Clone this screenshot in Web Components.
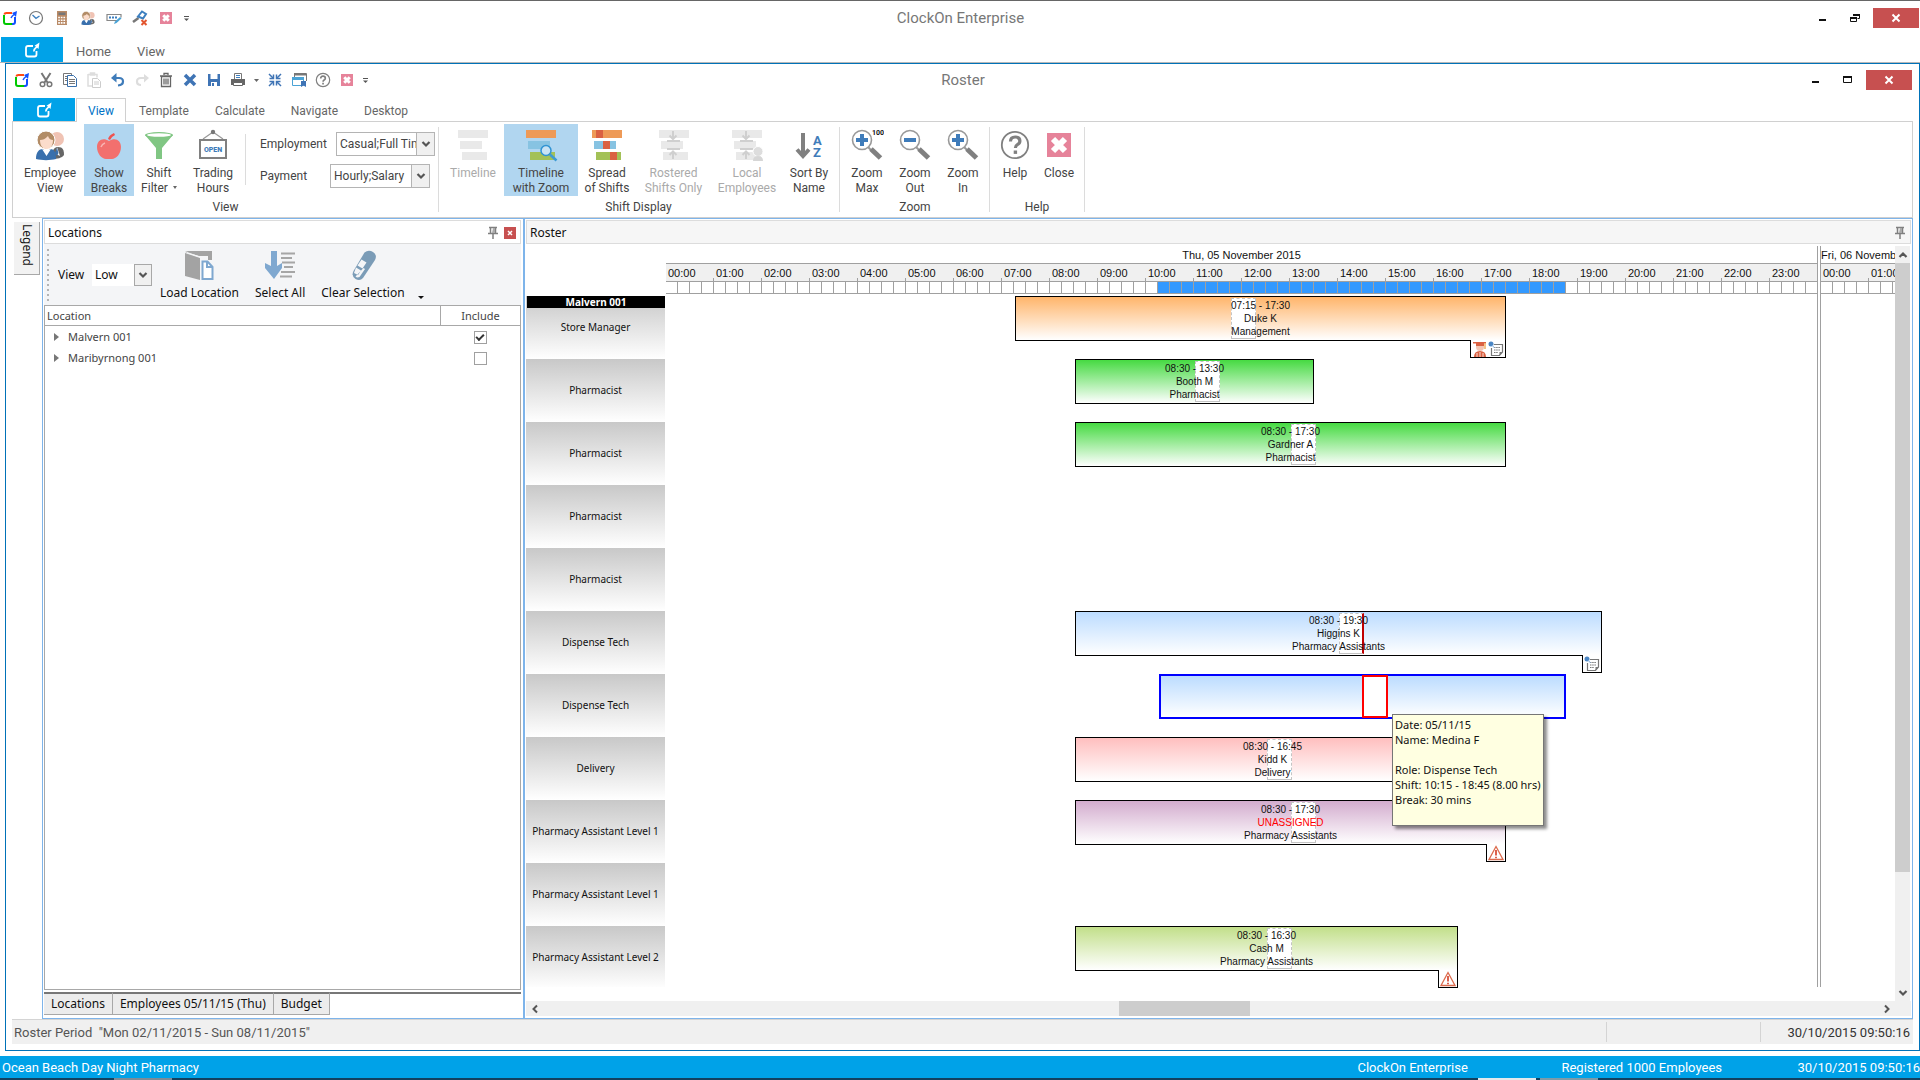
<!DOCTYPE html>
<html lang="en">
<head>
<meta charset="utf-8">
<title>ClockOn Enterprise</title>
<style>
html,body{margin:0;height:100%}
body{font-family:Roboto,"Open Sans",sans-serif;font-size:12px;line-height:15px;color:#444;background:#fff;overflow:hidden}
</style>
</head>
<body>
<clock-app></clock-app>
<script>
const ICONS = {
  logo: ['0 0 16 16', '<g fill="none" stroke-width="2"><path d="M2 5V12q0 2 2 2H10" stroke="#00c800"/><path d="M2.300 4.500q.4-1.500 2-1.500H10" stroke="#ff4a12"/><path d="M10 14h1q2 0 2-2V7" stroke="#1250ff"/><path d="M9 8q1-2 3-3.500" stroke="#1250ff" stroke-width="1.500"/></g><path d="M10 3l5-2-1 6z" fill="#1250ff"/>'],
  logowhite: ['0 0 16 16', '<path d="M9 4H4Q2 4 2 6V12.500q0 2 2 2H10.500q2 0 2-2V9" fill="none" stroke="#fff" stroke-width="1.800"/><path d="M9 9.500q.5-3.500 3-5l-1.500-.8L15.500.5 14.500 7l-1.300-1.200Q11.500 6.500 10.500 9.500z" fill="#fff"/>'],
  clock: ['0 0 16 16', '<circle cx="8" cy="8" r="6.500" fill="#fff" stroke="#777" stroke-width="1.200"/><path d="M4.500 5l3.500 3.300L11.500 6" fill="none" stroke="#3d7fbf" stroke-width="1.300"/>'],
  calc: ['0 0 16 16', '<path d="M3 1h10v14H3z" fill="#b98a66"/><path d="M4.500 2.500h7v2.500h-7z" fill="#777"/><g stroke="#fff" stroke-width="1.600" stroke-dasharray="1.700 .9"><path d="M4.200 7.500h8M4.200 10.200h8M4.200 12.900h8"/></g>'],
  people: ['0 0 34 34', '<circle cx="24" cy="11" r="7" fill="#f0c3b4"/><path d="M20 31c-2-10 2-12 5-12 5 0 6 3 6 8-2 3-7 4-11 4z" fill="#666"/><path d="M24 19l3 9-4-2z" fill="#fff"/><path d="M24 20l1.500 5-1.500 3-2-3z" fill="#3970ad"/><circle cx="13" cy="12" r="9" fill="#b28c66" stroke="#fff"/><path d="M7 12c3 0 5-1 8-4 1 3 3 4 5 4 0 6-3 9-6.500 9S7 18 7 12z" fill="#fbdccb"/><path d="M3 31c0-7 3-10 7-10l4 4 3-4c4 0 6 3 6 10-6 1.500-14 1.500-20 0z" fill="#3970ad"/><path d="M9 21l4.500 7L18 21c-3 1.500-6 1.500-9 0z" fill="#fff"/>'],
  keyboard: ['0 0 16 16', '<path d="M12 10.500H1v-6h14v3" fill="none" stroke="#888" stroke-width="1.200"/><path d="M3 7.500h8" stroke="#3d7fbf" stroke-width="2" stroke-dasharray="2 1"/><path d="M8 14l1-2.500L14 7l1.500 1.500-5 4.500z" fill="#4aa3d6"/>'],
  gavel: ['0 0 16 16', '<path d="M1 12l5.500-4" stroke="#777" stroke-width="2.500"/><path d="M6 6.500l5 2L14 4l-4-2.500z" fill="#fff" stroke="#3d7fbf" stroke-width="2"/><path d="M9.500 10l5 5m0-5l-5 5" stroke="#e2552f" stroke-width="2"/>'],
  closepink: ['0 0 24 24', '<path d="M0 0h24v24H0z" fill="#e6839a"/><path d="M6.500 6.500l11 11m0-11l-11 11" stroke="#fff" stroke-width="6"/>'],
  more: ['0 0 5 16', '<path d="M0 6.500h5" stroke="#555"/><path d="M0 8.500h5L2.500 11z" fill="#555"/>'],
  caret: ['0 0 5 16', '<path d="M0 7h5L2.500 10z" fill="#666"/>'],
  cut: ['0 0 16 16', '<path d="M3.500 1l6 9.500M12.500 1l-6 9.500" stroke="#777" stroke-width="2"/><g fill="#fff" stroke="#777" stroke-width="1.500"><circle cx="4.500" cy="12.300" r="2.300"/><circle cx="11.500" cy="12.300" r="2.300"/></g>'],
  copy: ['0 0 16 16', '<path d="M1.500 1.500h8v11h-8z" fill="#fff" stroke="#777"/><path d="M5.500 3.500h6l3 3v8h-9z" fill="#fff" stroke="#3970ad"/><path d="M7 7.500h6M7 9.500h6M7 11.500h6M3 4.500h2M3 6.500h2M3 8.500h2" stroke="#777"/>'],
  paste: ['0 0 16 16', '<path d="M2 2.500h9v3M2 2v12h4M4.500 1h4v2h-4z" fill="none" stroke="#ddd" stroke-width="1.500"/><path d="M6.500 6.500h5l3 3v6h-8z" fill="#fff" stroke="#ccc"/><path d="M8 10h5M8 12h5" stroke="#ccc"/>'],
  undo: ['0 0 16 16', '<path d="M3 6h6q4 0 4 3.500T8 13.500" fill="none" stroke="#3f7cba" stroke-width="2.200"/><path d="M6.500 1L1 6l5.500 4.500z" fill="#3f7cba"/>'],
  redo: ['0 0 16 16', '<path d="M13 6H7Q3 6 3 9.500t4 3.500" fill="none" stroke="#ddd" stroke-width="2.200"/><path d="M10 2l5 4-5 4.500z" fill="#ddd"/>'],
  trash: ['0 0 16 16', '<path d="M3.500 4.500h9v10h-9zM2 4h12M6 3V1.500h4V3M6 6.500v6M8 6.500v6M10 6.500v6" fill="none" stroke="#666" stroke-width="1.300"/>'],
  cross: ['0 0 16 16', '<path d="M3 3l10 10M13 3L3 13" stroke="#3f74b5" stroke-width="3.500"/>'],
  save: ['0 0 16 16', '<path d="M2 2h12v12H2z" fill="#3f74b5"/><path d="M4.500 2h7v5h-7zM5 10h6v4H5z" fill="#fff"/><path d="M6 11h2v3H6z" fill="#3f74b5"/>'],
  print: ['0 0 16 16', '<path d="M4.500 7V1.500h7V7" fill="#fff" stroke="#777"/><path d="M6 3.500h4M6 5.500h4" stroke="#3d7fbf"/><path d="M1 7h14v6H1z" fill="#666"/><path d="M3.500 10.500h9v3h-9z" fill="#fff" stroke="#666"/>'],
  shrink: ['0 0 16 16', '<g stroke="#3f74b5" stroke-width="1.500" fill="none"><path d="M2 2l4 4M14 2L10 6M2 14l4-4M14 14L10 10"/><path d="M2.500 6.500h4v-4M13.500 6.500h-4v-4M2.500 9.500h4v4M13.500 9.500h-4v4"/></g>'],
  windows: ['0 0 16 16', '<path d="M3.500 5V1.500h12V9" fill="none" stroke="#777"/><path d="M3 1h12v2.500H3z" fill="#777"/><path d="M1.500 5.500h11v8h-11z" fill="#fff" stroke="#4aa3d6"/><path d="M1 5h12v3H1z" fill="#4aa3d6"/><path d="M10 9h5v6l-2.500-1.500L10 15z" fill="#3f74b5"/>'],
  help: ['0 0 34 34', '<circle cx="17" cy="17" r="13.200" fill="none" stroke="#808080" stroke-width="1.800"/><path d="M12.500 13.500q0-4.500 4.700-4.500t4.700 4q0 2.300-2.500 3.700-2 1.200-2 3.300" fill="none" stroke="#808080" stroke-width="3.200"/><path d="M15.700 22.500h3.400v3.400h-3.400z" fill="#808080"/>'],
  smallhelp: ['0 0 16 16', '<circle cx="8" cy="8" r="6.700" fill="none" stroke="#808080" stroke-width="1.200"/><path d="M5.700 6.500q0-2.300 2.300-2.300t2.300 2q0 1.200-1.200 1.900-1 .6-1 1.700" fill="none" stroke="#808080" stroke-width="1.700"/><path d="M7.200 10.800h1.700v1.700H7.200z" fill="#808080"/>'],
  apple: ['0 0 34 34', '<path d="M17 13c6-4 12-1 12 6 0 7-5 12-9 12h-6c-4 0-9-5-9-12 0-7 6-10 12-6z" fill="#f2706e"/><path d="M16 11q1-4 6-6l1 2q-4 2-5 5z" fill="#ef5350"/><path d="M9 19q1-3 4-4" fill="none" stroke="#f9b4b2" stroke-width="1.500"/>'],
  funnel: ['0 0 34 34', '<path d="M3 7l11 13v11h6V20L31 7z" fill="#80c683"/><ellipse cx="17" cy="7" rx="14" ry="3" fill="#80c683"/><ellipse cx="17" cy="7" rx="12" ry="1.800" fill="#fff"/>'],
  open: ['0 0 34 34', '<path d="M17 4L7 11M17 4l10 7" stroke="#999" stroke-width="1.200"/><circle cx="17" cy="4" r="2.200" fill="#777"/><path d="M4 12h26v18H4z" fill="#fff" stroke="#808080" stroke-width="2"/><text x="17" y="24" text-anchor="middle" font-family="Roboto,sans-serif" font-size="7" font-weight="900" fill="#3f7cba">OPEN</text>'],
  lines: ['0 0 34 34', '<path d="M2 2h30v8H2zM4 13h22v8H4zM6 24h25v8H6z" fill="#e9e9e9"/>'],
  linezoom: ['0 0 34 34', '<path d="M2 2h30v8H2z" fill="#ee9a57"/><path d="M4 13h22v8H4z" fill="#87c3e2"/><path d="M6 24h25v8H6z" fill="#a3c157"/><circle cx="22" cy="22.500" r="5" fill="#c9e3f4" stroke="#2f93d3" stroke-width="1.500"/><path d="M26 26.500l6.500 6" stroke="#3d9ad4" stroke-width="2.500"/>'],
  spread: ['0 0 34 34', '<path d="M2 2h30v8H2z" fill="#ee9a57"/><path d="M4 13h22v8H4z" fill="#87c3e2"/><path d="M6 24h25v8H6z" fill="#a3c157"/><path d="M6 2h7v8H6zM13 13h7v8h-7zM20 24h7v8h-7z" fill="#da6142"/>'],
  rostered: ['0 0 34 34', '<path d="M2 2h30v8H2zM4 13h22v8H4zM6 24h25v8H6z" fill="#e9e9e9"/><path d="M10 13h13M10 21h13M16 3v7M16 24v7M12.500 7.500l3.500 3.500 3.500-3.500M12.500 27l3.500-3.500 3.500 3.500" fill="none" stroke="#cfcfcf" stroke-width="2"/>'],
  local: ['0 0 34 34', '<path d="M2 2h30v8H2zM4 13h22v8H4zM6 24h25v8H6z" fill="#e9e9e9"/><path d="M10 13h13M10 21h13M16 3v7M16 24v7M12.500 7.500l3.500 3.500 3.500-3.500M12.500 27l3.500-3.500 3.500 3.500" fill="none" stroke="#cfcfcf" stroke-width="2"/><circle cx="28" cy="23.500" r="5" fill="#ddd" stroke="#fff"/><path d="M23 33q0-5 5-5t5 5z" fill="#d6d6d6"/>'],
  sort: ['0 0 34 34', '<path d="M11 5v22M5 21.500l6 6.500 6-6.500" fill="none" stroke="#808080" stroke-width="4"/><g font-family="Roboto,sans-serif" font-weight="700" font-size="13" fill="#3f7cba"><text x="21" y="16.500">A</text><text x="21" y="29">Z</text></g>'],
  zoomin: ['0 0 34 34', '<path d="M18 19l4 4" stroke="#999" stroke-width="2"/><path d="M21 21l9.500 9" stroke="#808080" stroke-width="5"/><circle cx="12" cy="12" r="9.500" fill="#fff" stroke="#999" stroke-width="1.600"/><path d="M12 6v12M6 12h12" stroke="#3f7cba" stroke-width="4"/>'],
  zoomout: ['0 0 34 34', '<path d="M18 19l4 4" stroke="#999" stroke-width="2"/><path d="M21 21l9.500 9" stroke="#808080" stroke-width="5"/><circle cx="12" cy="12" r="9.500" fill="#fff" stroke="#999" stroke-width="1.600"/><path d="M6 12h12" stroke="#3f7cba" stroke-width="4"/>'],
  zoommax: ['0 0 34 34', '<path d="M18 19l4 4" stroke="#999" stroke-width="2"/><path d="M21 21l9.500 9" stroke="#808080" stroke-width="5"/><circle cx="12" cy="12" r="9.500" fill="#fff" stroke="#999" stroke-width="1.600"/><path d="M12 6v12M6 12h12" stroke="#3f7cba" stroke-width="4"/><text x="22" y="7" font-family="Roboto,sans-serif" font-size="7" font-weight="700" fill="#111">100</text>'],
  bigclose: ['0 0 34 34', '<path d="M5 5h24v24H5z" fill="#e6839a"/><path d="M11 11l12 12m0-12L11 23" stroke="#fff" stroke-width="6"/>'],
  load: ['0 0 32 32', '<path d="M2 4l15 5v22L2 27z" fill="#a3a3a3"/><path d="M2 3L5 2h24v9h-4V7h-9z" fill="#a3a3a3"/><path d="M4 3.500L17 8h8" fill="none" stroke="#f4f5f7"/><path d="M19.500 12.500h5l5 5.500v12h-10z" fill="#fff" stroke="#7fa8d0" stroke-width="2"/><path d="M24 12v6h6" fill="none" stroke="#7fa8d0" stroke-width="2"/>'],
  selectall: ['0 0 32 32', '<path d="M7 2h6v15l5-3v5l-8 11L1 19v-5l6 3z" fill="#7fa8d0"/><path d="M17 4.500h14M17 9h11M18 13.500h13M20 18h9M17 23h14M16 27.500h12" stroke="#a6a6a6" stroke-width="2"/>'],
  clear: ['0 0 32 32', '<path d="M17.500 3.500q4-3 8.500-.5 4.500 3 2 8L16 29q-3 3.500-7.500 1-4.500-3-2-8z" fill="#7b9cb7"/><path d="M14.500 10.500l5 3-4 6-5-3zM9 18.500l5 3-3 4.500-4-2zM8.500 27.500q1.500 1.500 4 .5L18 20l-1.500-1z" fill="#f4f5f7"/>'],
  pin: ['0 0 12 14', '<path d="M2 1.500h8M1 7.500h10M3.500 2v5M8.500 2v5M6 8v5" fill="none" stroke="#808080" stroke-width="1.500"/><path d="M6 2h2v5H5z" fill="#aaa"/>'],
  xsmall: ['0 0 12 12', '<path d="M0 0h12v12H0z" fill="#c75050"/><path d="M4 4l4 4m0-4L4 8" stroke="#fff" stroke-width="1.500"/>'],
  min: ['0 0 12 12', '<path d="M2 8h7" stroke="#111" stroke-width="2"/>'],
  restore: ['0 0 12 12', '<path d="M4.500 4V2.500h6v4H8.500" fill="none" stroke="#111"/><path d="M4 2h7v2H4zM1 5h7v2H1z" fill="#111"/><path d="M1.500 5.500h6v4h-6z" fill="none" stroke="#111"/>'],
  max: ['0 0 12 12', '<path d="M1.500 3.500h8v5h-8z" fill="none" stroke="#111"/><path d="M1 2h9v2H1z" fill="#111"/>'],
  x: ['0 0 12 12', '<path d="M2.500 2.500l7 7m0-7l-7 7" stroke="#fff" stroke-width="2"/>'],
  chevdown: ['0 0 10 10', '<path d="M1.500 3L5 6.500 8.500 3" fill="none" stroke="#555" stroke-width="2.200"/>'],
  chevup: ['0 0 10 10', '<path d="M1.500 7L5 3.500 8.500 7" fill="none" stroke="#555" stroke-width="2.200"/>'],
  chevleft: ['0 0 10 10', '<path d="M7 1.500L3.500 5 7 8.500" fill="none" stroke="#555" stroke-width="2"/>'],
  chevright: ['0 0 10 10', '<path d="M3 1.500L6.500 5 3 8.500" fill="none" stroke="#555" stroke-width="2"/>'],
  graduate: ['0 0 16 16', '<path d="M4 1h8v4H4z" fill="#da6142"/><path d="M1 1h13v1.500H1z" fill="#da6142"/><path d="M13 2v6" stroke="#f0b060" stroke-width="1.500"/><path d="M4 5h8q.5 5-4 5T4 5z" fill="#f3c6b4"/><path d="M2 16q0-6 6-6t6 6z" fill="#da6142"/><path d="M8 11v5M5 12v4M11 12v4" stroke="#fff" stroke-width=".8"/>'],
  note: ['0 0 16 16', '<path d="M6 3.500h8.500v7.500l-3 3.500h-8V7" fill="#fff" stroke="#777" stroke-width="1.200"/><path d="M6 6.500h6M6 9h6M6 11.500h4" stroke="#777" stroke-dasharray="1.500 .7"/><path d="M11.500 14.500V11h3z" fill="#777"/><circle cx="3" cy="3" r="2.500" fill="#4a86c5"/><path d="M4 4l2.500 3" stroke="#8ab4e0"/>'],
  warn: ['0 0 16 16', '<path d="M8 1.500L15 14.500H1z" fill="#fff" stroke="#dc6b4e" stroke-width="1.300"/><path d="M8 5v5.500M8 11.800v1.500" stroke="#d9503a" stroke-width="1.800"/>']
};

const component = (name, markup, setup) => {
  const template = document.createElement('template');
  template.innerHTML = markup;
  customElements.define(name, class extends HTMLElement {
    connectedCallback() {
      if (this.shadowRoot) return;
      const root = this.attachShadow({ mode: 'open' });
      root.append(template.content.cloneNode(true));
      if (setup) setup(this, root);
    }
  });
};

component('ui-icon', `<style>:host{display:block;width:16px;height:16px;flex:none}svg{display:block;width:100%;height:100%}</style>`, (host, root) => {
  const [box, shapes] = ICONS[host.getAttribute('name')];
  const holder = document.createElement('template');
  holder.innerHTML = `<svg viewBox="${box}" aria-hidden="true">${shapes}</svg>`;
  root.append(holder.content);
});

/* Caption row of a window: quick access tools, centred title, window controls */
component('title-bar', `<style>
:host{display:grid;grid-template-columns:1fr auto 1fr;align-items:center;box-sizing:border-box;height:36px;padding:0 1px 3px 2px}
h1{margin:0;font-size:15px;line-height:20px;font-weight:400;color:#777;padding-top:1px}
.tools{display:flex;gap:var(--tool-gap,10px);align-items:center}
button{border:0;padding:0;background:none;display:grid;place-items:center}
.tools button{width:16px}
.tools button.thin,.thin ui-icon{width:5px}
.small ui-icon{width:12px;height:12px}
.win{display:flex;justify-content:flex-end}
.win button{width:32px;height:20px}
.win button.close{width:46px;background:#c75050;margin-left:2px}
.win ui-icon{width:12px;height:12px}
</style><div class="tools"></div><h1><slot></slot></h1><div class="win"></div>`, (host, root) => {
  const kinds = { more: 'thin', caret: 'thin', closepink: 'small' };
  root.querySelector('.tools').innerHTML = host.getAttribute('tools').split(' ').map(t =>
    `<button aria-label="${t}" class="${kinds[t] || ''}"><ui-icon name="${t}"></ui-icon></button>`).join('');
  root.querySelector('.win').innerHTML = `<button aria-label="Minimise"><ui-icon name="min"></ui-icon></button><button aria-label="Size"><ui-icon name="${host.getAttribute('size')}"></ui-icon></button><button class="close" aria-label="Close"><ui-icon name="x"></ui-icon></button>`;
});

component('ribbon-tabs', `<style>
:host{display:flex;align-items:stretch}
button{font:inherit;color:#666;background:none;border:0;padding:3px 13px 0}
.app{width:62px;background:#00a2e8;display:grid;place-items:center;padding:0}
.on{color:#0072c6;background:#fff;border:1px solid #d0d0d0;border-bottom:0;padding:2px 11px 0;margin:0 0 -1px 1px;position:relative}
</style><button class="app" aria-label="Application menu"><ui-icon name="logowhite"></ui-icon></button>`, (host, root) => {
  host.getAttribute('tabs').split(',').forEach(t => {
    const b = document.createElement('button');
    b.textContent = t;
    if (t === host.getAttribute('active')) b.className = 'on';
    root.append(b);
  });
});

component('ribbon-group', `<style>
:host{display:flex;flex-direction:column;padding:2px var(--end,3px) 0 3px;box-sizing:border-box}
.row{display:flex;align-items:flex-start}
.label{text-align:center;margin-top:4px;color:#444}
</style><div class="row"><slot></slot></div><div class="label"></div>`, (host, root) => {
  root.querySelector('.label').textContent = host.getAttribute('label');
});

component('ribbon-separator', `<style>:host{display:block;width:1px;background:#dcdcdc;margin:5px 0}</style>`);

component('ribbon-button', `<style>
:host{display:block;width:var(--w,48px);flex:none}
button{font:inherit;color:#444;width:100%;height:72px;padding:4px 0 0;border:0;background:none;display:flex;flex-direction:column;align-items:center;gap:4px}
:host([active]) button{background:#b1d6f0}
button:disabled{color:#aaa}
ui-icon{width:34px;height:34px}
span{white-space:pre;text-align:center}
</style><button><span><slot></slot></span></button>`, (host, root) => {
  const button = root.querySelector('button');
  button.insertAdjacentHTML('afterbegin', `<ui-icon name="${host.getAttribute('icon')}"></ui-icon>`);
  button.disabled = host.hasAttribute('off');
});

component('combo-box', `<style>
:host{display:flex;align-items:center}
label{min-width:var(--label,70px)}
.box{display:grid;grid-template-columns:1fr 18px;box-sizing:border-box;width:var(--field,100px);height:24px;border:1px solid #b4b4b4;background:#fff}
:host([flat]) .box{height:22px;border:0}
select{grid-area:1/1/2/3;font:inherit;color:inherit;min-width:0;width:100%;appearance:none;border:0;background:none;padding:0 18px 0 3px;margin:0;outline:0;border-radius:0}
.arrow{grid-area:1/2;pointer-events:none;background:#f0f0f0;border-left:1px solid #b4b4b4;display:grid;place-items:center}
:host([flat]) .arrow{border:1px solid #a8a8a8}
.arrow ui-icon{width:10px;height:10px}
</style><label for="s"></label><div class="box"><select id="s"><option></option></select><span class="arrow"><ui-icon name="chevdown"></ui-icon></span></div>`, (host, root) => {
  root.querySelector('label').textContent = host.getAttribute('label');
  root.querySelector('option').textContent = host.getAttribute('value');
});

component('roster-ribbon', `<style>
:host{display:flex;border:1px solid #d0d0d0;height:95px}
.inner{width:1px;height:51px;background:#dcdcdc;margin:10px 14px 0 3px}
.fields{display:flex;flex-direction:column;gap:8px;padding-top:8px}
.emp{--label:76px;--field:99px}
.caret{display:inline-block;width:0;border:2px solid transparent;border-top:3px solid #666;border-bottom:0;margin:0 0 3px 5px}
</style>
<ribbon-group label="View">
<ribbon-button icon="people" style="--w:68px">Employee
View</ribbon-button><ribbon-button icon="apple" active style="--w:50px">Show
Breaks</ribbon-button><ribbon-button icon="funnel" style="--w:50px">Shift
Filter<i class="caret"></i></ribbon-button><ribbon-button icon="open" style="--w:58px">Trading
Hours</ribbon-button><span class="inner"></span>
<div class="fields"><combo-box class="emp" label="Employment" value="Casual;Full Tim"></combo-box><combo-box label="Payment" value="Hourly;Salary"></combo-box></div>
</ribbon-group><ribbon-separator></ribbon-separator>
<ribbon-group label="Shift Display" style="--end:4px">
<ribbon-button icon="lines" off style="--w:62px">Timeline</ribbon-button><ribbon-button icon="linezoom" active style="--w:74px">Timeline
with Zoom</ribbon-button><ribbon-button icon="spread" style="--w:58px">Spread
of Shifts</ribbon-button><ribbon-button icon="rostered" off style="--w:75px">Rostered
Shifts Only</ribbon-button><ribbon-button icon="local" off style="--w:72px">Local
Employees</ribbon-button><ribbon-button icon="sort" style="--w:52px">Sort By
Name</ribbon-button>
</ribbon-group><ribbon-separator></ribbon-separator>
<ribbon-group label="Zoom" style="--end:2px">
<ribbon-button icon="zoommax">Zoom
Max</ribbon-button><ribbon-button icon="zoomout">Zoom
Out</ribbon-button><ribbon-button icon="zoomin">Zoom
In</ribbon-button>
</ribbon-group><ribbon-separator></ribbon-separator>
<ribbon-group label="Help">
<ribbon-button icon="help" style="--w:44px">Help</ribbon-button><ribbon-button icon="bigclose" style="--w:44px">Close</ribbon-button>
</ribbon-group><ribbon-separator></ribbon-separator>`);

/* Docked panel with a caption */
component('dock-panel', `<style>
:host{display:flex;flex-direction:column;min-width:0;padding:1px;font-family:"Noto Sans",sans-serif;color:#111}
header{display:flex;align-items:center;gap:5px;box-sizing:border-box;height:24px;padding:1px 4px 0 3px;border:1px solid #dcdcdc;background:var(--caption,#fff);flex:none}
h2{margin:0;flex:1;font-size:12px;line-height:16px;font-weight:400}
button{border:0;padding:0;background:none}
.pin{width:12px;height:14px}.x{width:12px;height:12px}
</style><header><h2></h2><button aria-label="Auto hide"><ui-icon class="pin" name="pin"></ui-icon></button></header><slot></slot>`, (host, root) => {
  root.querySelector('h2').textContent = host.getAttribute('caption');
  if (host.hasAttribute('closable')) root.querySelector('header').insertAdjacentHTML('beforeend', '<button aria-label="Close panel"><ui-icon class="x" name="xsmall"></ui-icon></button>');
});

component('location-tools', `<style>
:host{display:flex;align-items:center;box-sizing:border-box;height:61px;background:#f4f5f7;font-size:12px;flex:none;line-height:16px;padding:1px 0 0 3px}
.grip{width:2px;height:53px;background:repeating-linear-gradient(#b4b4b4 0 2px,transparent 2px 5px);margin-right:9px}
combo-box{--label:34px;--field:60px}
button{font:inherit;color:inherit;border:0;background:none;padding:0 8px;height:57px;display:flex;flex-direction:column;align-items:center;gap:4px}
button ui-icon{width:32px;height:32px;margin-top:2px}
.caret{align-self:flex-end;width:0;border:3px solid transparent;border-top-color:#111;border-bottom:0;margin:0 0 6px 5px}
</style><span class="grip"></span><combo-box flat label="View" value="Low"></combo-box>
<button><ui-icon name="load"></ui-icon>Load Location</button><button><ui-icon name="selectall"></ui-icon>Select All</button><button><ui-icon name="clear"></ui-icon>Clear Selection</button><i class="caret"></i>`);

component('location-tree', `<style>
:host{display:block;flex:1;border:1px solid #a8a8a8;font-size:11px;line-height:15px;color:#444}
table{width:100%;border-collapse:collapse}
th{font-weight:400;text-align:left;height:19px;padding:0 2px;border-bottom:1px solid #a8a8a8}
th+th{width:75px;text-align:center;border-left:1px solid #a8a8a8}
td{height:21px;padding:0 2px}
td+td{text-align:center}
label{display:flex;align-items:center;gap:9px;padding-left:7px}
label::before{content:"";border:4px solid transparent;border-left:5px solid #777;border-right:0}
input{appearance:none;box-sizing:border-box;width:13px;height:13px;border:1px solid #a0a0a0;margin:0;background:#fff;display:inline-grid;place-items:center;vertical-align:middle}
input:checked::before{content:"";width:6px;height:3px;border:solid #333;border-width:0 0 2px 2px;transform:rotate(-45deg);margin-bottom:2px}
</style><table><thead><tr><th>Location</th><th>Include</th></tr></thead><tbody>
<tr><td><label for="a">Malvern 001</label></td><td><input id="a" type="checkbox" checked></td></tr>
<tr><td><label for="b">Maribyrnong 001</label></td><td><input id="b" type="checkbox"></td></tr></tbody></table>`);

component('panel-tabs', `<style>
:host{display:flex;align-items:flex-start;height:25px;margin-top:2px;font-size:12px;line-height:16px;flex:none}
button{font:inherit;color:inherit;box-sizing:border-box;height:23px;min-width:49px;padding:0 7px;border:1px solid #a8a8a8;border-top:2px solid #777;border-left:0;background:#ececec;white-space:nowrap}
button:first-child{height:25px;padding:3px 7px 0;background:#fff;border:1px solid #a8a8a8;border-top:0}
.rest{flex:1;border-top:2px solid #777}
</style><button>Locations</button><button>Employees 05/11/15 (Thu)</button><button>Budget</button><span class="rest"></span>`);

component('scroll-bar', `<style>
:host{display:flex;background:#f0f0f0;flex:none}
:host([vertical]){flex-direction:column;width:15px;margin-right:1px}
:host(:not([vertical])){height:15px;padding-right:16px}
button{border:0;background:none;padding:0;width:17px;height:15px;display:grid;place-items:center;flex:none}
:host([vertical]) button{width:15px;height:17px}
ui-icon{width:10px;height:10px}
.before{flex:var(--before)}.thumb{flex:var(--thumb);background:#cdcdcd}.after{flex:var(--after)}
</style><button aria-label="Back"></button><span class="before"></span><span class="thumb"></span><span class="after"></span><button aria-label="Forward"></button>`, (host, root) => {
  const names = host.hasAttribute('vertical') ? ['chevup', 'chevdown'] : ['chevleft', 'chevright'];
  root.querySelectorAll('button').forEach((b, i) => b.innerHTML = `<ui-icon name="${names[i]}"></ui-icon>`);
});

/* One shift; start, end and pause are hours of the day on a 48px-per-hour scale */
component('shift-bar', `<style>
:host{position:absolute;top:0;height:45px;box-sizing:border-box;left:calc(var(--from)*48px + 1px);width:calc((var(--to) - var(--from))*48px - 1px);border:1px solid #000;background:linear-gradient(var(--tint),#fff);font:10px/13px "Liberation Sans",sans-serif;color:#111;text-align:center}
:host([selected]){border:2px solid #00f}
.pause{position:absolute;top:1px;left:calc((var(--pause) - var(--from))*48px - 1px);width:25px;height:41px;box-sizing:border-box;background:#fff;border:1px dashed #c4c4c4;border-bottom-style:solid}
:host([late]) .pause{border-right:2px solid #c00000}
:host([selected]) .pause{border:2px solid #f00;top:-1px;left:calc((var(--pause) - var(--from))*48px - 3px);height:43px;width:26px}
.text{position:relative;padding-top:2px}
.open{color:#f00}
.tag{position:absolute;top:43px;right:-1px;height:18px;box-sizing:border-box;display:flex;align-items:center;background:#fff;border:1px solid #000;border-top:0;padding:0 1px}
.tag[hidden]{display:none}
</style><div class="pause"></div><div class="text"></div><div class="tag" hidden></div>`, (host, root) => {
  const lines = (host.getAttribute('lines') || '').split('|').filter(Boolean);
  for (const line of lines) {
    const d = document.createElement('div');
    d.textContent = line;
    if (line === 'UNASSIGNED') d.className = 'open';
    root.querySelector('.text').append(d);
  }
  const flags = host.getAttribute('flags');
  if (flags) {
    const tag = root.querySelector('.tag');
    tag.hidden = false;
    tag.innerHTML = flags.split(' ').map(f => `<ui-icon name="${f}"></ui-icon>`).join('');
  }
});

component('shift-hint', `<style>
:host{position:absolute;z-index:2;box-sizing:border-box;white-space:pre;font:11px/15px "Noto Sans",sans-serif;color:#111;background:#ffffe1;border:1px solid #767676;padding:2px 2px 3px;box-shadow:3px 3px 3px rgba(0,0,0,.45)}
</style><slot></slot>`);

component('time-scale', `<style>
:host{display:block;font:11px/19px "Liberation Sans",sans-serif;color:#111;overflow:hidden}
.date{height:17px;text-align:center;border-bottom:1px solid #a0a0a0;white-space:nowrap;overflow:hidden}
:host([next]) .date{text-align:left}
.hours{display:flex;height:17px;background:#f0f0f0;border-bottom:1px solid #a0a0a0;overflow:hidden}
.hours span{width:48px;flex:none;box-sizing:border-box;padding-left:2px;background:linear-gradient(#a0a0a0,#a0a0a0) right bottom/1px 3px no-repeat;height:17px}
.ticks,.ticks div{height:11px;background:repeating-linear-gradient(to right,transparent 0 11px,#a0a0a0 11px 12px)}
.ticks{border-bottom:1px solid #a0a0a0}
.ticks div{background-color:#39f;margin-left:492px;width:408px}
</style><div class="date"></div><div class="hours"></div><div class="ticks"></div>`, (host, root) => {
  root.querySelector('.date').textContent = host.getAttribute('date');
  const count = Number(host.getAttribute('hours'));
  root.querySelector('.hours').innerHTML = Array.from({ length: count }, (_, h) => `<span>${String(h).padStart(2, '0')}:00</span>`).join('');
  if (host.hasAttribute('marked')) root.querySelector('.ticks').innerHTML = '<div></div>';
});

component('roster-chart', `<style>
:host{display:flex;flex-direction:column;flex:1;min-height:0;margin-bottom:1px}
.view{display:flex;flex:1;min-height:0;padding-top:2px}
.names{width:139px;flex:none;margin:50px 1px 0 0;font-size:10px;line-height:13px;text-align:center;height:691px;overflow:hidden}
.name{height:63px;display:grid;place-items:center;background:linear-gradient(#c8c8c8,#fff);position:relative}
.site{position:absolute;inset:0 0 auto 1px;height:12px;line-height:12px;background:#000;color:#fff;font-weight:700}
.days{flex:1;min-width:0;display:flex;overflow:hidden}
.day{width:1151px;flex:none;border-right:1px solid #a0a0a0;height:741px}
.next{flex:1;min-width:0;border-left:1px solid #a0a0a0;border-right:0;margin-left:2px;overflow:hidden}
.lanes{padding-top:2px}
.lane{height:63px;position:relative}
shift-hint{left:726px;top:40px}
</style>
<div class="view"><div class="names"></div>
<div class="days"><div class="day"><time-scale date="Thu, 05 November 2015" hours="24" marked></time-scale><div class="lanes"></div></div>
<div class="day next"><time-scale next date="Fri, 06 Novemb" hours="2"></time-scale></div></div>
<scroll-bar vertical style="--before:0;--thumb:609;--after:112"></scroll-bar></div>
<scroll-bar style="--before:576;--thumb:131;--after:628"></scroll-bar>`, (host, root) => {
  const rows = [
    ['Store Manager', '--from:7.25;--to:17.5;--pause:11.75;--tint:#ffb56b', '07:15 - 17:30|Duke K|Management', 'graduate note'],
    ['Pharmacist', '--from:8.5;--to:13.5;--pause:11;--tint:#46da42', '08:30 - 13:30|Booth M|Pharmacist'],
    ['Pharmacist', '--from:8.5;--to:17.5;--pause:13;--tint:#46da42', '08:30 - 17:30|Gardner A|Pharmacist'],
    ['Pharmacist'],
    ['Pharmacist'],
    ['Dispense Tech', '--from:8.5;--to:19.5;--pause:14;--tint:#bcdcff', '08:30 - 19:30|Higgins K|Pharmacy Assistants', 'note', 'late'],
    ['Dispense Tech', '--from:10.25;--to:18.75;--pause:14.5;--tint:#bcdcff', '', '', 'selected'],
    ['Delivery', '--from:8.5;--to:16.75;--pause:12.5;--tint:#ffbfbf', '08:30 - 16:45|Kidd K|Delivery'],
    ['Pharmacy Assistant Level 1', '--from:8.5;--to:17.5;--pause:13;--tint:#d3acce', '08:30 - 17:30|UNASSIGNED|Pharmacy Assistants', 'warn'],
    ['Pharmacy Assistant Level 1'],
    ['Pharmacy Assistant Level 2', '--from:8.5;--to:16.5;--pause:12.5;--tint:#c2df8a', '08:30 - 16:30|Cash M|Pharmacy Assistants', 'warn']
  ];
  root.querySelector('.names').innerHTML = rows.map((r, i) => `<div class="name">${i ? '' : '<div class="site">Malvern 001</div>'}<span>${r[0]}</span></div>`).join('');
  root.querySelector('.lanes').innerHTML = rows.map(r => `<div class="lane">${r[1] ? `<shift-bar style="${r[1]}" lines="${r[2]}" flags="${r[3] || ''}" ${r[4] || ''}></shift-bar>` : ''}${r[4] === 'selected' ? '<shift-hint>Date: 05/11/15\nName: Medina F\n\nRole: Dispense Tech\nShift: 10:15 - 18:45 (8.00 hrs)\nBreak: 30 mins\n </shift-hint>' : ''}</div>`).join('');
});

component('roster-window', `<style>
:host{display:flex;flex-direction:column;flex:1;min-height:0;border:1px solid #0072b8;margin-left:5px;background:#fff}
title-bar{--tool-gap:8px;height:34px;padding:0 7px 3px 8px}
ribbon-tabs{height:23px;margin-left:7px}
roster-ribbon{margin:0 6px}
main{flex:1;min-height:0;display:flex;margin-right:6px}
.legend{width:36px;flex:none}
.legend button{writing-mode:vertical-rl;font:12px/16px "Noto Sans",sans-serif;color:#111;text-align:left;margin:4px 0 0 8px;padding:2px 4px;width:26px;height:53px;border:1px solid #a8a8a8;border-width:0 1px 1px 0;background:#f2f2f2}
.dock{flex:1;min-width:0;display:flex;border:1px solid #7eb4ea}
.left{width:477px;flex:none}
.split{width:2px;background:#7eb4ea;margin-left:1px}
.right{flex:1;--caption:#f6f6f6}
footer{display:flex;align-items:center;height:24px;margin:0 6px 6px;background:#f0f0f0;border-top:1px solid #d4d4d4;font-size:13px;line-height:16px;color:#555}
.period{flex:1;padding:2px 0 0 2px;white-space:pre}
.cell{width:153px;border-left:1px solid #d4d4d4;height:20px}
.time{width:149px;padding:3px 3px 0 0;text-align:right;color:#333;height:17px}
</style>
<title-bar size="max" tools="logo cut copy paste undo redo trash cross save print caret shrink windows smallhelp closepink more">Roster</title-bar>
<ribbon-tabs tabs="View,Template,Calculate,Navigate,Desktop" active="View"></ribbon-tabs>
<roster-ribbon></roster-ribbon>
<main><div class="legend"><button>Legend</button></div><div class="dock">
<dock-panel class="left" caption="Locations" closable><location-tools></location-tools><location-tree></location-tree><panel-tabs></panel-tabs></dock-panel>
<span class="split"></span>
<dock-panel class="right" caption="Roster"><roster-chart></roster-chart></dock-panel></div></main>
<footer><span class="period">Roster Period  "Mon 02/11/2015 - Sun 08/11/2015"</span><span class="cell"></span><span class="cell time">30/10/2015 09:50:16</span></footer>`);

component('clock-app', `<style>
:host{display:flex;flex-direction:column;height:100vh;box-sizing:border-box;border-top:1px solid #666}
.top{height:25px;padding-left:1px;border-bottom:1px solid #b8b8b8;font-size:13px}
.bar{display:flex;align-items:center;box-sizing:border-box;height:22px;margin-top:5px;padding:1px 0 0 2px;background:#00a2e8;color:#fff;font-size:13px;line-height:16px;white-space:nowrap}
.bar span:first-child{flex:1}
.bar .product{width:204px}.bar .seats{width:236px}
.edge{height:2px;background:linear-gradient(to right,#12405f 114px,#7d8b96 114px 172px,#12405f 172px 1478px,#e4e9ec 1478px 1536px,#12405f 1536px 1540px,#7d9ba8 1540px 1598px,#12405f 1598px)}
</style>
<title-bar size="restore" tools="logo clock calc people keyboard gavel closepink more">ClockOn Enterprise</title-bar>
<ribbon-tabs class="top" tabs="Home,View"></ribbon-tabs>
<roster-window></roster-window>
<div class="bar"><span>Ocean Beach Day Night Pharmacy</span><span class="product">ClockOn Enterprise</span><span class="seats">Registered 1000 Employees</span><span>30/10/2015 09:50:16</span></div>
<div class="edge"></div>`);
</script>
</body>
</html>
